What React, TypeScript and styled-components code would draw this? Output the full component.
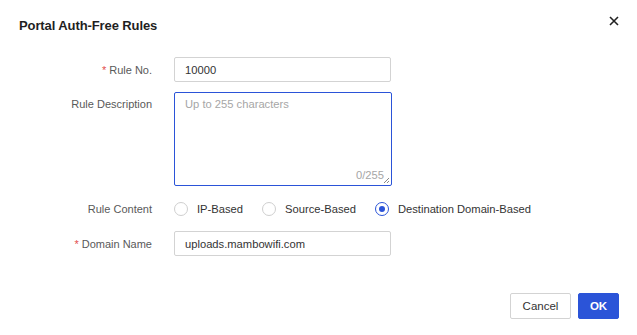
import React, { useState } from 'react'
import styled, { createGlobalStyle } from 'styled-components'

const Global = createGlobalStyle`
  html, body { margin: 0; padding: 0; background: #fff; }
  body { font-family: "Liberation Sans", Arial, sans-serif; color: #333; }
  * { box-sizing: border-box; }
`

const Dialog = styled.div`
  width: 637px;
  height: 335px;
  display: flex;
  flex-direction: column;
  background: #fff;
`

const Header = styled.div`
  height: 51px;
  padding: 0 16px 0 19px;
  display: flex;
  align-items: center;
  justify-content: space-between;
`

const Title = styled.h3`
  margin: 0;
  font-size: 13px;
  font-weight: 700;
  color: #1f1f1f;
  letter-spacing: -0.1px;
`

const Close = styled.button`
  border: 0;
  background: none;
  padding: 0;
  width: 14px;
  height: 14px;
  display: flex;
  align-items: center;
  justify-content: center;
  cursor: pointer;
  margin-top: -10px;
`

const Form = styled.div`
  flex: 1;
  padding-top: 6px;
  display: flex;
  flex-direction: column;
  gap: 10px;
`

const Row = styled.div<{ $top?: boolean }>`
  display: grid;
  grid-template-columns: 152px 217px;
  column-gap: 22px;
  align-items: ${p => (p.$top ? 'start' : 'center')};
`

const Label = styled.label<{ $top?: boolean }>`
  font-size: 11px;
  color: #595959;
  text-align: right;
  line-height: 14px;
  padding-top: ${p => (p.$top ? '5px' : '0')};
`

const Star = styled.span`
  color: #e34d4d;
  margin-right: 3px;
`

const Input = styled.input`
  height: 25px;
  width: 217px;
  border: 1px solid #d3d3d3;
  border-radius: 2px;
  padding: 0 10px;
  font: 11.2px "Liberation Sans", Arial, sans-serif;
  color: #333;
  outline: none;
`

const AreaWrap = styled.div`
  position: relative;
  width: 218px;
  height: 94px;
  border: 1px solid #2b54d8;
  border-radius: 2px;
`

const Area = styled.textarea`
  width: 100%;
  height: 100%;
  border: 0;
  resize: none;
  padding: 5px 10px;
  font: 11.2px "Liberation Sans", Arial, sans-serif;
  color: #333;
  outline: none;
  background: transparent;
  &::placeholder { color: #a6a6a6; }
`

const Counter = styled.span`
  position: absolute;
  right: 7px;
  bottom: 4px;
  font-size: 11.2px;
  color: #a6a6a6;
`

const Grip = styled.svg`
  position: absolute;
  right: 1px;
  bottom: 1px;
`

const Radios = styled.div`
  display: flex;
  align-items: center;
  gap: 19px;
  height: 25px;
  white-space: nowrap;
`

const RadioItem = styled.label`
  display: flex;
  align-items: center;
  gap: 9px;
  font-size: 11.2px;
  color: #333;
  cursor: pointer;
`

const Dot = styled.span<{ $on: boolean }>`
  width: 14px;
  height: 14px;
  border-radius: 50%;
  border: 1px solid ${p => (p.$on ? '#2b54d8' : '#cfcfcf')};
  display: flex;
  align-items: center;
  justify-content: center;
  &::after {
    content: '';
    width: 6px;
    height: 6px;
    border-radius: 50%;
    background: ${p => (p.$on ? '#2b54d8' : 'transparent')};
  }
`

const Footer = styled.div`
  display: flex;
  justify-content: flex-end;
  gap: 7px;
  padding: 0 18px 16px 0;
`

const Button = styled.button<{ $primary?: boolean }>`
  height: 26px;
  padding: 0;
  width: ${p => (p.$primary ? '41px' : '61px')};
  border-radius: 2px;
  font: ${p => (p.$primary ? 700 : 400)} 11.5px "Liberation Sans", Arial, sans-serif;
  border: 1px solid ${p => (p.$primary ? '#2b54d8' : '#d3d3d3')};
  background: ${p => (p.$primary ? '#2b54d8' : '#fff')};
  color: ${p => (p.$primary ? '#fff' : '#333')};
  cursor: pointer;
`

const options = ['IP-Based', 'Source-Based', 'Destination Domain-Based']

export default function App() {
  const [mode, setMode] = useState(2)
  return (
    <Dialog>
      <Global />
      <Header>
        <Title>Portal Auth-Free Rules</Title>
        <Close aria-label="close">
          <svg width="10" height="10" viewBox="0 0 10 10">
            <path d="M1 1L9 9M9 1L1 9" stroke="#222" strokeWidth="1.6" />
          </svg>
        </Close>
      </Header>
      <Form>
        <Row>
          <Label><Star>*</Star>Rule No.</Label>
          <Input defaultValue="10000" />
        </Row>
        <Row $top>
          <Label $top>Rule Description</Label>
          <AreaWrap>
            <Area placeholder="Up to 255 characters" />
            <Counter>0/255</Counter>
            <Grip width="7" height="7" viewBox="0 0 7 7">
              <path d="M6 1L1 6M6 4L4 6" stroke="#888" strokeWidth="1" />
            </Grip>
          </AreaWrap>
        </Row>
        <Row>
          <Label>Rule Content</Label>
          <Radios>
            {options.map((o, i) => (
              <RadioItem key={o} onClick={() => setMode(i)}>
                <Dot $on={mode === i} />
                {o}
              </RadioItem>
            ))}
          </Radios>
        </Row>
        <Row>
          <Label><Star>*</Star>Domain Name</Label>
          <Input defaultValue="uploads.mambowifi.com" />
        </Row>
      </Form>
      <Footer>
        <Button>Cancel</Button>
        <Button $primary>OK</Button>
      </Footer>
    </Dialog>
  )
}
